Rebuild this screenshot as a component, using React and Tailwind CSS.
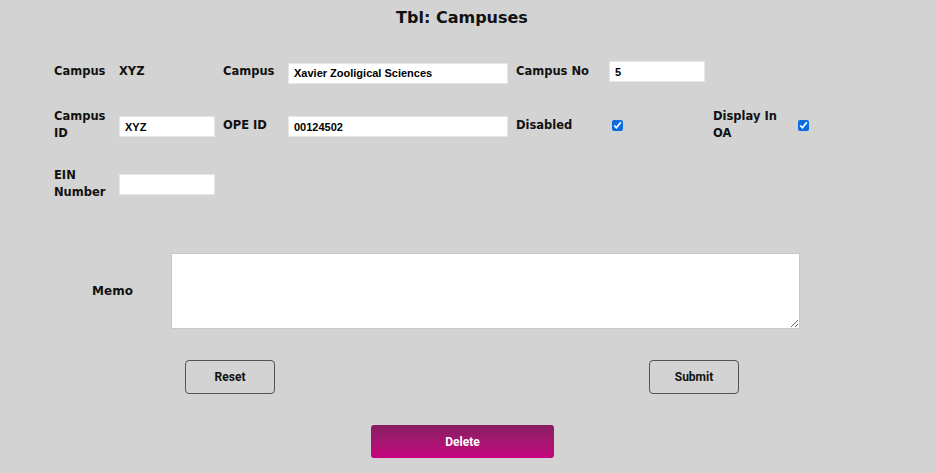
import React from "react";

const label = "font-['DejaVu_Sans',sans-serif] font-bold text-[11.5px] leading-[17px] text-[#111]";
const field =
  "h-[21px] bg-white border border-[#e6e6e6] px-[5px] font-['Liberation_Sans',Arial,sans-serif] font-bold text-[11px] text-black outline-none";

const Check = () => (
  <input type="checkbox" defaultChecked className="ml-[3px] w-[11px] h-[11px] accent-[#0b6be0]" />
);

export default function App() {
  return (
    <div className="w-full h-[473px] bg-[#d3d3d3] overflow-hidden">
      <div className="w-[924px]">
        {/* title */}
        <h1 className="pt-[6px] text-center font-['DejaVu_Sans',sans-serif] font-bold text-[16px] leading-[24px] text-[#111]">
          Tbl: Campuses
        </h1>

        <div className="pl-[54px] mt-[27px]">
          {/* row 1 */}
          <div className="flex items-center h-[28px] pt-[1px]">
            <div className={`${label} w-[65px]`}>Campus</div>
            <div className={`${label} w-[104px]`}>XYZ</div>
            <div className={`${label} w-[65px]`}>Campus</div>
            <div className="w-[228px]">
              <input className={`${field} w-[220px]`} defaultValue="Xavier Zooligical Sciences" />
            </div>
            <div className={`${label} w-[93px]`}>Campus No</div>
            <input className={`${field} w-[96px]`} defaultValue="5" />
          </div>

          {/* row 2 */}
          <div className="flex items-center h-[36px] mt-[22px]">
            <div className={`${label} w-[65px]`}>Campus ID</div>
            <div className="w-[104px]">
              <input className={`${field} w-[96px]`} defaultValue="XYZ" />
            </div>
            <div className={`${label} w-[65px]`}>OPE ID</div>
            <div className="w-[228px]">
              <input className={`${field} w-[220px]`} defaultValue="00124502" />
            </div>
            <div className={`${label} w-[93px]`}>Disabled</div>
            <div className="w-[104px]">
              <Check />
            </div>
            <div className={`${label} w-[80px] mr-[2px]`}>Display In OA</div>
            <Check />
          </div>

          {/* row 3 */}
          <div className="flex items-center h-[36px] mt-[23px]">
            <div className={`${label} w-[65px]`}>EIN Number</div>
            <input className={`${field} w-[96px]`} defaultValue="" />
          </div>

          {/* memo */}
          <div className="flex items-center mt-[51px]">
            <div className={`${label} w-[117px] text-center text-[12px]`}>Memo</div>
            <textarea className="w-[629px] h-[76px] bg-white border border-[#c8c8c8] outline-none" />
          </div>
        </div>

        {/* buttons */}
        <div className="flex justify-between pl-[185px] pr-[185px] mt-[31px]">
          <button className="w-[90px] h-[34px] rounded-[4px] border border-[#555] font-['Roboto',sans-serif] font-bold text-[12px] text-[#111]">
            Reset
          </button>
          <button className="w-[90px] h-[34px] rounded-[4px] border border-[#555] font-['Roboto',sans-serif] font-bold text-[12px] text-[#111]">
            Submit
          </button>
        </div>
        <div className="flex justify-center mt-[31px] pl-[1px]">
          <button className="w-[183px] h-[33px] rounded-[3px] bg-gradient-to-b from-[#871d62] to-[#c6007e] font-['Roboto',sans-serif] font-bold text-[12px] text-white">
            Delete
          </button>
        </div>
      </div>
    </div>
  );
}
